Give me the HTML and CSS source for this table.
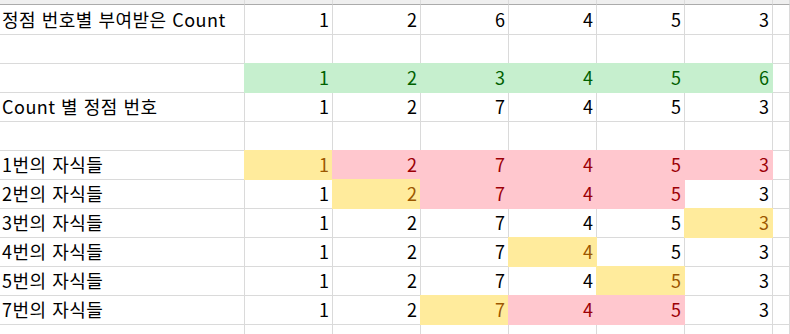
FILE: index.html
```html
<!DOCTYPE html>
<html lang="ko">
<head>
<meta charset="utf-8">
<link rel="stylesheet" href="styles.css">
</head>
<body>
<div class="sheet">
  <div class="hd"></div><div class="hd"></div><div class="hd"></div><div class="hd"></div><div class="hd"></div><div class="hd"></div><div class="hd"></div><div class="hd"></div>

  <div class="c t">정점 번호별 부여받은 Count</div><div class="c n">1</div><div class="c n">2</div><div class="c n">6</div><div class="c n">4</div><div class="c n">5</div><div class="c n">3</div><div class="c"></div>

  <div class="c t"></div><div class="c n"></div><div class="c n"></div><div class="c n"></div><div class="c n"></div><div class="c n"></div><div class="c n"></div><div class="c"></div>

  <div class="c t"></div><div class="c n g">1</div><div class="c n g">2</div><div class="c n g">3</div><div class="c n g">4</div><div class="c n g">5</div><div class="c n g">6</div><div class="c"></div>

  <div class="c t">Count 별 정점 번호</div><div class="c n">1</div><div class="c n">2</div><div class="c n">7</div><div class="c n">4</div><div class="c n">5</div><div class="c n">3</div><div class="c"></div>

  <div class="c t"></div><div class="c n"></div><div class="c n"></div><div class="c n"></div><div class="c n"></div><div class="c n"></div><div class="c n"></div><div class="c"></div>

  <div class="c t">1번의 자식들</div><div class="c n y">1</div><div class="c n r">2</div><div class="c n r">7</div><div class="c n r">4</div><div class="c n r">5</div><div class="c n r">3</div><div class="c"></div>

  <div class="c t">2번의 자식들</div><div class="c n">1</div><div class="c n y">2</div><div class="c n r">7</div><div class="c n r">4</div><div class="c n r">5</div><div class="c n">3</div><div class="c"></div>

  <div class="c t">3번의 자식들</div><div class="c n">1</div><div class="c n">2</div><div class="c n">7</div><div class="c n">4</div><div class="c n">5</div><div class="c n y">3</div><div class="c"></div>

  <div class="c t">4번의 자식들</div><div class="c n">1</div><div class="c n">2</div><div class="c n">7</div><div class="c n y">4</div><div class="c n">5</div><div class="c n">3</div><div class="c"></div>

  <div class="c t">5번의 자식들</div><div class="c n">1</div><div class="c n">2</div><div class="c n">7</div><div class="c n">4</div><div class="c n y">5</div><div class="c n">3</div><div class="c"></div>

  <div class="c t">7번의 자식들</div><div class="c n">1</div><div class="c n">2</div><div class="c n y">7</div><div class="c n r">4</div><div class="c n r">5</div><div class="c n">3</div><div class="c"></div>

  <div class="c last"></div><div class="c last"></div><div class="c last"></div><div class="c last"></div><div class="c last"></div><div class="c last"></div><div class="c last"></div><div class="c last"></div>
</div>
</body>
</html>
```

FILE: styles.css
```css
html, body {
  margin: 0;
  padding: 0;
  background: #ffffff;
  overflow: hidden;
}

.sheet {
  display: grid;
  grid-template-columns: 245px repeat(6, 88px) 17px;
  grid-template-rows: 5px 30px repeat(10, 29px) 9px;
  width: 790px;
  height: 334px;
  overflow: hidden;
  font-family: "Noto Sans CJK KR", "Noto Sans", sans-serif;
  font-size: 18px;
  color: #000000;
}

.hd {
  box-sizing: border-box;
  background: #efefef;
  border-right: 1px solid #dcdcdc;
  border-bottom: 1px solid #ababab;
}

.c {
  box-sizing: border-box;
  background: #ffffff;
  border-right: 1px solid #dadada;
  border-bottom: 1px solid #dadada;
  display: flex;
  align-items: flex-end;
  line-height: 24px;
  padding-bottom: 3px;
  white-space: nowrap;
}

.t {
  padding-left: 2px;
  letter-spacing: 0.5px;
}

.n {
  justify-content: flex-end;
  padding-right: 3px;
}

.last {
  border-bottom: none;
}

.g {
  background: #c6efce;
  color: #006100;
  border-color: #c6efce;
  box-shadow: -1px 0 0 0 #c6efce, 0 -1px 0 0 #c6efce, -1px -1px 0 0 #c6efce;
}

.r {
  background: #ffc7ce;
  color: #9c0006;
  border-color: #ffc7ce;
  box-shadow: -1px 0 0 0 #ffc7ce, 0 -1px 0 0 #ffc7ce, -1px -1px 0 0 #ffc7ce;
}

.y {
  background: #ffeb9c;
  color: #9c5700;
  border-color: #ffeb9c;
  box-shadow: -1px 0 0 0 #ffeb9c, 0 -1px 0 0 #ffeb9c, -1px -1px 0 0 #ffeb9c;
}
```
